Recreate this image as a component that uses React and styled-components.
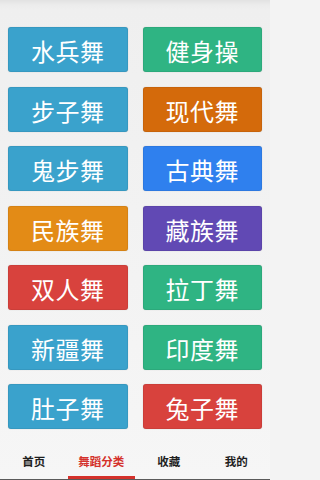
import React from "react";
import styled, { createGlobalStyle } from "styled-components";

const Global = createGlobalStyle`
  html, body { margin: 0; padding: 0; background: #f3f3f3; }
  body {
    width: 270px;
    height: 480px;
    overflow: hidden;
    font-family: "Noto Sans CJK SC", "Noto Sans", sans-serif;
  }
`;

const Page = styled.div`
  display: flex;
  flex-direction: column;
  width: 270px;
  height: 480px;
  background: linear-gradient(#e2e2e2 0px, #ececec 5px, #efefef 10px, #f6f6f6 100%);
`;

const Grid = styled.div`
  flex: 1;
  display: grid;
  grid-template-columns: 1fr 1fr;
  grid-auto-rows: 45px;
  column-gap: 15px;
  row-gap: 14.5px;
  padding: 27px 8px 0 8px;
`;

const DanceButton = styled.button`
  border: none;
  margin: 0;
  padding: 0;
  border-radius: 3px;
  background: ${(p) => p.$bg};
  box-shadow: inset 0 0 0 1px rgba(0, 0, 0, 0.06), 0 0 1px rgba(0, 0, 0, 0.25);
  color: #fff;
  font-family: "Noto Sans CJK SC", "Noto Sans", sans-serif;
  font-size: 24px;
  line-height: 1;
  display: flex;
  align-items: center;
  justify-content: center;
  padding-top: 3px;
  letter-spacing: 0.5px;
`;

const TabBar = styled.nav`
  display: flex;
  height: 39px;
  border-bottom: 1px solid #5a5a5a;
`;

const Tab = styled.div`
  flex: 1;
  display: flex;
  align-items: center;
  justify-content: center;
  padding-top: 6px;
  box-sizing: border-box;
  border-bottom: 3px solid ${(p) => (p.$active ? "#d4312b" : "transparent")};
  color: ${(p) => (p.$active ? "#d4312b" : "#1e1e1e")};
  font-size: 11.5px;
  font-weight: 700;
`;

const dances = [
  ["水兵舞", "#3aa2cc"],
  ["健身操", "#2fb483"],
  ["步子舞", "#3aa2cc"],
  ["现代舞", "#d46a0b"],
  ["鬼步舞", "#3aa2cc"],
  ["古典舞", "#2f80ee"],
  ["民族舞", "#e38b16"],
  ["藏族舞", "#6149b4"],
  ["双人舞", "#d8423d"],
  ["拉丁舞", "#2fb483"],
  ["新疆舞", "#3aa2cc"],
  ["印度舞", "#2fb483"],
  ["肚子舞", "#3aa2cc"],
  ["兔子舞", "#d8423d"],
];

const tabs = ["首页", "舞蹈分类", "收藏", "我的"];

export default function App() {
  return (
    <>
      <Global />
      <Page>
        <Grid>
          {dances.map(([name, bg]) => (
            <DanceButton key={name} $bg={bg}>
              {name}
            </DanceButton>
          ))}
        </Grid>
        <TabBar>
          {tabs.map((t) => (
            <Tab key={t} $active={t === "舞蹈分类"}>
              {t}
            </Tab>
          ))}
        </TabBar>
      </Page>
    </>
  );
}
